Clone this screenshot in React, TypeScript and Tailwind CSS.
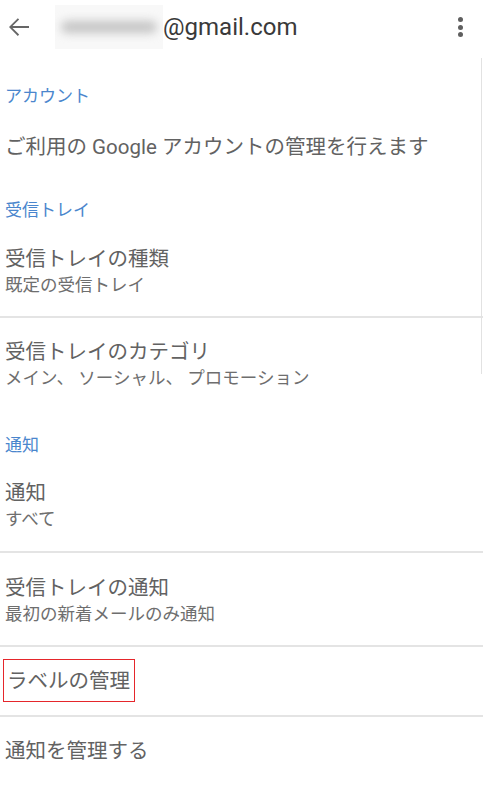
import React from "react";

const FONT = { fontFamily: "Roboto, 'Noto Sans CJK JP', 'Noto Sans', sans-serif" };

function Label({ text, cls }: { text: string; cls: string }) {
  return (
    <div className={`${cls} px-[5px]`}>
      <div className="text-[17px] leading-[24px] text-[#4a86cd]">{text}</div>
    </div>
  );
}

function Item({ title, sub, cls }: { title: string; sub?: string; cls: string }) {
  return (
    <div className={`${cls} px-[5px]`}>
      <div className="text-[20.5px] leading-[28px] text-[#626262] whitespace-nowrap">{title}</div>
      {sub && <div className="text-[17.5px] leading-[24px] text-[#6e6e6e] whitespace-nowrap">{sub}</div>}
    </div>
  );
}

export default function App() {
  return (
    <div style={FONT} className="w-[483px] h-[800px] bg-white overflow-hidden relative">
      {/* header */}
      <div className="h-[54px] flex items-center">
        <svg width="30" height="30" viewBox="0 0 24 24" className="ml-[4px] shrink-0" fill="#666">
          <path d="M20 11.25H6.8l5.3-5.3-1.05-1.05L4 12l7.05 7.1 1.05-1.05-5.3-5.3H20z" />
        </svg>
        <div className="ml-[21px] w-[108px] h-[44px] bg-[#f8f8f8] flex items-center justify-center overflow-hidden">
          <div className="w-[96px] h-[12px] rounded-full bg-[#c4c4c4] blur-[5px]" />
        </div>
        <div className="text-[24px] leading-[30px] text-[#3a3a3a]">@gmail.com</div>
        <div className="ml-auto mr-[20px] flex flex-col gap-[2.5px]">
          <div className="w-[5px] h-[5px] rounded-full bg-[#5f5f5f]" />
          <div className="w-[5px] h-[5px] rounded-full bg-[#5f5f5f]" />
          <div className="w-[5px] h-[5px] rounded-full bg-[#5f5f5f]" />
        </div>
      </div>

      <div className="relative">
        <div className="absolute right-[1px] top-[4px] h-[316px] w-[1.5px] bg-[#e2e2e2]" />
        <Label text="アカウント" cls="h-[64px] pt-[30px]" />
        <Item title="ご利用の Google アカウントの管理を行えます" cls="h-[64px] pt-[15px]" />
        <Label text="受信トレイ" cls="h-[54px] pt-[16px]" />
        <Item title="受信トレイの種類" sub="既定の受信トレイ" cls="h-[82px] pt-[9px] border-b-2 border-[#e4e4e4]" />
        <Item title="受信トレイのカテゴリ" sub="メイン、 ソーシャル、 プロモーション" cls="h-[100px] pt-[20px]" />
        <Label text="通知" cls="h-[49px] pt-[15px]" />
        <Item title="通知" sub="すべて" cls="h-[86px] pt-[12px] border-b-2 border-[#e4e4e4]" />
        <Item title="受信トレイの通知" sub="最初の新着メールのみ通知" cls="h-[94px] pt-[21px] border-b-2 border-[#e4e4e4]" />
        <div className="h-[70px] pt-[12px] border-b-2 border-[#e4e4e4] pl-[3px]">
          <div className="inline-flex h-[43px] items-center border border-[#e5262b] pl-[3px] pr-[4px]">
            <span className="text-[20.5px] leading-[28px] text-[#626262] whitespace-nowrap">ラベルの管理</span>
          </div>
        </div>
        <Item title="通知を管理する" cls="h-[80px] pt-[20px]" />
      </div>
    </div>
  );
}
